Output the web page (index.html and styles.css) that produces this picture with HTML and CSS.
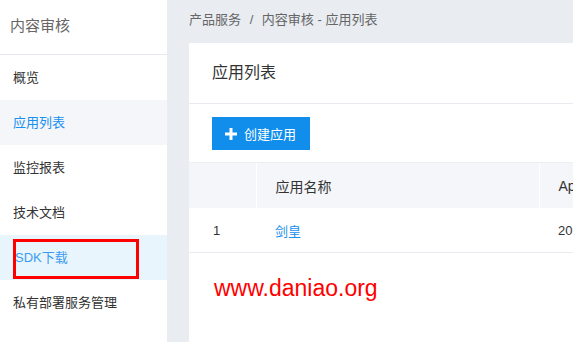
FILE: index.html
```html
<!DOCTYPE html>
<html lang="zh-CN">
<head>
    <meta charset="UTF-8">
    <meta name="viewport" content="width=device-width, initial-scale=1.0">
    <title>内容审核 - 应用列表</title>
    <link rel="stylesheet" href="styles.css">
</head>
<body>

<div class="layout">
    <div class="sidebar">
        <div class="side-title">内容审核</div>
        <ul class="menu">
            <li>概览</li>
            <li class="active">应用列表</li>
            <li>监控报表</li>
            <li>技术文档</li>
            <li class="hover marked">SDK下载</li>
            <li>私有部署服务管理</li>
        </ul>
    </div>

    <div class="main">
        <div class="crumbs">产品服务 <span class="sep">/</span> 内容审核 - 应用列表</div>

        <div class="card">
            <div class="card-title">应用列表</div>
            <div class="toolbar">
                <button class="btn">
                    <svg width="12" height="12" viewBox="0 0 12 12"><path d="M6 0v12M0 6h12" stroke="#fff" stroke-width="3"/></svg>
                    创建应用
                </button>
            </div>
            <table class="app-table">
                <colgroup>
                    <col style="width: 67px">
                    <col style="width: 283px">
                    <col>
                </colgroup>
                <thead>
                    <tr>
                        <th></th>
                        <th>应用名称</th>
                        <th>AppID</th>
                    </tr>
                </thead>
                <tbody>
                    <tr>
                        <td>1</td>
                        <td><a href="#">剑皇</a></td>
                        <td>2019-08-10</td>
                    </tr>
                </tbody>
            </table>
            <div class="watermark">www.daniao.org</div>
        </div>
    </div>
</div>

</body>
</html>
```

FILE: styles.css
```css
body {
    margin: 0;
    font-family: "Liberation Sans", "Noto Sans CJK SC", sans-serif;
    background: #e9ecf1;
    color: #333;
    font-size: 13px;
    overflow: hidden;
}
.layout {
    display: flex;
    height: 342px;
}
.sidebar {
    width: 167px;
    flex-shrink: 0;
    background: #fff;
}
.side-title {
    height: 54px;
    line-height: 52px;
    padding-left: 10px;
    font-size: 15px;
    color: #666;
    border-bottom: 1px solid #e6e8ee;
}
.menu {
    list-style: none;
    margin: 0;
    padding: 0;
}
.menu li {
    height: 45px;
    line-height: 45px;
    padding-left: 13px;
    color: #333;
}
.menu .active {
    background: #f4f6fa;
    color: #1890ee;
}
.menu .hover {
    background: #e9f5fd;
    color: #3d9bef;
    padding-left: 15px;
}
.marked {
    position: relative;
}
.marked::after {
    content: "";
    position: absolute;
    left: 13px;
    top: 4px;
    width: 120px;
    height: 34px;
    border: 3px solid #f00;
}
.main {
    flex: 1;
    padding-left: 22px;
    min-width: 0;
}
.crumbs {
    height: 43px;
    line-height: 40px;
    color: #666;
}
.sep {
    margin: 0 5px;
}
.card {
    background: #fff;
    height: 299px;
    overflow: hidden;
}
.card-title {
    height: 60px;
    line-height: 60px;
    padding-left: 23px;
    font-size: 16px;
    color: #333;
    border-bottom: 1px solid #e8eaef;
}
.toolbar {
    padding: 13px 23px 12px;
}
.btn {
    display: flex;
    align-items: center;
    gap: 7px;
    height: 33px;
    width: 98px;
    padding: 0 0 0 13px;
    border: none;
    background: #118eeb;
    color: #fff;
    font-family: inherit;
    font-size: 13px;
}
.app-table {
    width: 600px;
    table-layout: fixed;
    border-collapse: collapse;
    white-space: nowrap;
}
.app-table th {
    height: 45px;
    background: #f4f6fa;
    font-weight: normal;
    text-align: left;
    padding: 0 0 0 19px;
    border-left: 1px solid #fff;
    border-top: 1px solid #eceef2;
    font-size: 14px;
}
.app-table th:first-child {
    border-left: none;
}
.app-table td {
    height: 44px;
    padding: 0 0 0 19px;
    border-bottom: 1px solid #e8eaef;
}
.app-table td:first-child {
    padding-left: 24px;
}
.app-table a {
    color: #1890ee;
    text-decoration: none;
}
.watermark {
    padding: 22px 0 0 25px;
    font-size: 23px;
    color: #f00;
}
```
